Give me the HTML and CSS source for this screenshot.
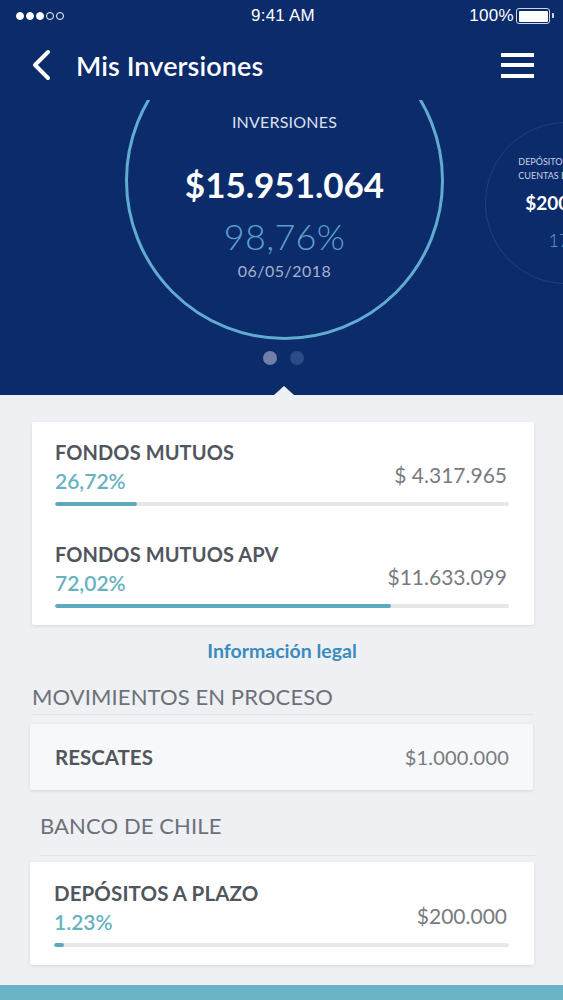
FILE: index.html
```html
<!DOCTYPE html>
<html lang="es">
<head>
<meta charset="utf-8">
<title>Mis Inversiones</title>
<link rel="stylesheet" href="styles.css">
</head>
<body>
<div class="app">
  <header class="top">
    <div class="status">
      <div class="signal"><i class="on"></i><i class="on"></i><i class="on"></i><i></i><i></i></div>
      <div class="clock">9:41 AM</div>
      <div class="battery"><span>100%</span><span class="batt"><span class="batt-fill"></span></span></div>
    </div>
    <div class="nav">
      <svg class="back" width="20" height="32" viewBox="0 0 20 32"><path d="M17 3 L4 16 L17 29" fill="none" stroke="#fff" stroke-width="4" stroke-linecap="round" stroke-linejoin="round"/></svg>
      <h1 class="title">Mis Inversiones</h1>
      <div class="burger"><i></i><i></i><i></i></div>
    </div>
  </header>

  <section class="hero">
    <div class="track">
      <div class="ring main-ring">
        <div class="ring-label">INVERSIONES</div>
        <div class="ring-amount">$15.951.064</div>
        <div class="ring-pct">98,76%</div>
        <div class="ring-date">06/05/2018</div>
      </div>
      <div class="ring side-ring">
        <div class="side-label">DEPÓSITOS A PLAZO Y<br>CUENTAS DE AHORRO</div>
        <div class="side-amount">$200.000</div>
        <div class="side-pct">17%</div>
      </div>
    </div>
    <div class="dots"><i class="active"></i><i></i></div>
  </section>

  <main class="content">
    <div class="card first">
      <div class="item">
        <div class="item-title">FONDOS MUTUOS</div>
        <div class="item-row">
          <span class="pct">26,72%</span>
          <span class="amount">$ 4.317.965</span>
        </div>
        <div class="bar"><div class="fill" style="width:18%"></div></div>
      </div>
      <div class="item">
        <div class="item-title">FONDOS MUTUOS APV</div>
        <div class="item-row">
          <span class="pct">72,02%</span>
          <span class="amount">$11.633.099</span>
        </div>
        <div class="bar"><div class="fill" style="width:74%"></div></div>
      </div>
    </div>

    <a class="legal">Información legal</a>

    <h2 class="section">MOVIMIENTOS EN PROCESO</h2>
    <div class="card plain">
      <span class="plain-title">RESCATES</span>
      <span class="plain-amount">$1.000.000</span>
    </div>

    <h2 class="section indent">BANCO DE CHILE</h2>
    <div class="card single">
      <div class="item">
        <div class="item-title">DEPÓSITOS A PLAZO</div>
        <div class="item-row">
          <span class="pct">1.23%</span>
          <span class="amount">$200.000</span>
        </div>
        <div class="bar"><div class="fill" style="width:2.3%"></div></div>
      </div>
    </div>
  </main>
  <footer class="bottom-bar"></footer>
</div>
</body>
</html>
```

FILE: styles.css
```css
* { box-sizing: border-box; }
html, body { margin: 0; padding: 0; }
body {
  font-family: Lato, "Noto Sans", sans-serif;
  background: #eef0f3;
  width: 563px;
  height: 1000px;
  overflow: hidden;
}
.app { display: flex; flex-direction: column; height: 1000px; }

.top { background: #0b2b6b; color: #fff; }
.status {
  height: 32px;
  display: flex;
  align-items: center;
  justify-content: space-between;
  padding: 0 13px 0 16px;
  font-family: "Liberation Sans", Arial, sans-serif;
  font-size: 17px;
}
.signal { display: flex; gap: 2px; width: 120px; }
.signal i {
  width: 8px; height: 8px; border-radius: 50%;
  border: 1px solid #fff;
  display: block;
}
.signal i.on { background: #fff; }
.clock { letter-spacing: 0.2px; }
.battery { display: flex; align-items: center; gap: 2px; width: 120px; justify-content: flex-end; letter-spacing: 0.3px; }
.batt {
  width: 34px; height: 16px;
  border: 1.5px solid #cfd7e6;
  border-radius: 3px;
  padding: 1.5px;
  display: flex;
  position: relative;
}
.batt::after {
  content: "";
  position: absolute;
  right: -5px; top: 4px;
  width: 2.5px; height: 5px;
  background: #cfd7e6;
  border-radius: 0 1px 1px 0;
}
.batt-fill { flex: 1; background: #fff; border-radius: 1px; }

.nav {
  height: 68px;
  display: flex;
  align-items: center;
  padding: 0 29px 2px 31px;
}
.back { display: block; margin-right: 25px; }
.title {
  margin: 0;
  font-size: 27px;
  font-weight: 600;
  letter-spacing: 0.1px;
  flex: 1;
}
.burger { display: flex; flex-direction: column; gap: 6.5px; width: 33px; }
.burger i { display: block; height: 4px; background: #fff; }

.hero {
  background: #0b2b6b;
  height: 295px;
  overflow: hidden;
  position: relative;
  display: flex;
  flex-direction: column;
}
.hero::after {
  content: "";
  position: absolute;
  left: 274px;
  bottom: 0;
  border-left: 10px solid transparent;
  border-right: 10px solid transparent;
  border-bottom: 9px solid #eef0f3;
}
.track {
  height: 240px;
  display: flex;
  align-items: flex-start;
  flex-shrink: 0;
}
.ring {
  border-radius: 50%;
  flex-shrink: 0;
  display: flex;
  flex-direction: column;
  align-items: center;
  color: #fff;
}
.main-ring {
  width: 319px; height: 319px;
  margin-left: 125px;
  margin-top: -79px;
  border: 3px solid #62abd0;
  padding-top: 88px;
}
.ring-label { font-size: 16px; color: #d9e0ee; letter-spacing: 0.2px; line-height: 20px; }
.ring-amount { font-size: 35px; font-weight: 700; line-height: 40px; margin-top: 32px; }
.ring-pct { font-size: 36px; font-weight: 300; color: #5e9fcc; line-height: 40px; margin-top: 12px; letter-spacing: 0.3px; }
.ring-date { font-size: 16px; color: #a5b2cd; line-height: 20px; margin-top: 5px; letter-spacing: 0.5px; }

.side-ring {
  width: 162px; height: 162px;
  margin-left: 41px;
  margin-top: 22px;
  border: 1.5px solid #1f417f;
  padding-top: 32px;
}
.side-label { font-size: 9px; color: #c9d2e3; text-align: center; line-height: 14px; white-space: nowrap; }
.side-amount { font-size: 19px; font-weight: 700; margin-top: 8px; line-height: 24px; white-space: nowrap; }
.side-pct { font-size: 18px; font-weight: 300; color: #5e9fcc; margin-top: 14px; }

.dots { display: flex; justify-content: center; gap: 13px; margin-top: 11px; padding-left: 4px; }
.dots i { display: block; width: 14px; height: 14px; border-radius: 50%; background: #2b4b87; }
.dots i.active { background: #7080a8; }

.content {
  flex: 1;
  padding: 27px 29px 0 30px;
  display: flex;
  flex-direction: column;
}
.card {
  background: #fff;
  box-shadow: 0 1px 3px rgba(40, 50, 70, 0.12);
  border-radius: 2px;
}
.card.first { margin-left: 2px; padding: 18px 25px 17px 23px; }
.item { display: flex; flex-direction: column; }
.item + .item { margin-top: 36px; }
.item-title { font-size: 20px; font-weight: 700; color: #51565d; line-height: 24px; letter-spacing: 0.1px; }
.item-row { display: flex; justify-content: space-between; align-items: flex-end; margin-top: 2px; height: 28px; }
.pct { font-size: 21px; color: #67b2c1; line-height: 26px; font-weight: 600; }
.amount { font-size: 21px; color: #777b81; line-height: 26px; margin-bottom: 6px; margin-right: 2px; letter-spacing: 0; }
.bar { height: 4px; background: #e6e7e9; border-radius: 2px; margin-top: 8px; overflow: hidden; }
.fill { height: 100%; background: #5ea8c1; border-radius: 2px; }

.legal {
  display: block;
  text-align: center;
  color: #3b8bbf;
  font-weight: 700;
  font-size: 19.5px;
  margin-top: 14px;
  line-height: 24px;
}
.section {
  margin: 21px 0 0 2px;
  font-size: 22px;
  font-weight: 400;
  color: #6c7179;
  letter-spacing: 0.1px;
  line-height: 26px;
  padding-bottom: 4px;
  border-bottom: 1px solid #e1e4e8;
}
.section.indent { margin-left: 10px; margin-top: 23px; padding-bottom: 16px; margin-right: -2px; }

.card.plain {
  background: #f7f8fa;
  margin-top: 9px;
  height: 66px;
  display: flex;
  align-items: center;
  justify-content: space-between;
  padding: 0 24px 0 25px;
  margin-right: 1px;
}
.plain-title { font-size: 20.5px; font-weight: 700; color: #51565d; }
.plain-amount { font-size: 20px; color: #777b81; letter-spacing: 0.2px; }

.card.single {
  margin-top: 6px;
  padding: 19px 25px 18px 24px;
}
.card.single .item-title { font-size: 20.5px; }

.bottom-bar { height: 15px; background: #68b3c4; flex-shrink: 0; }
```
